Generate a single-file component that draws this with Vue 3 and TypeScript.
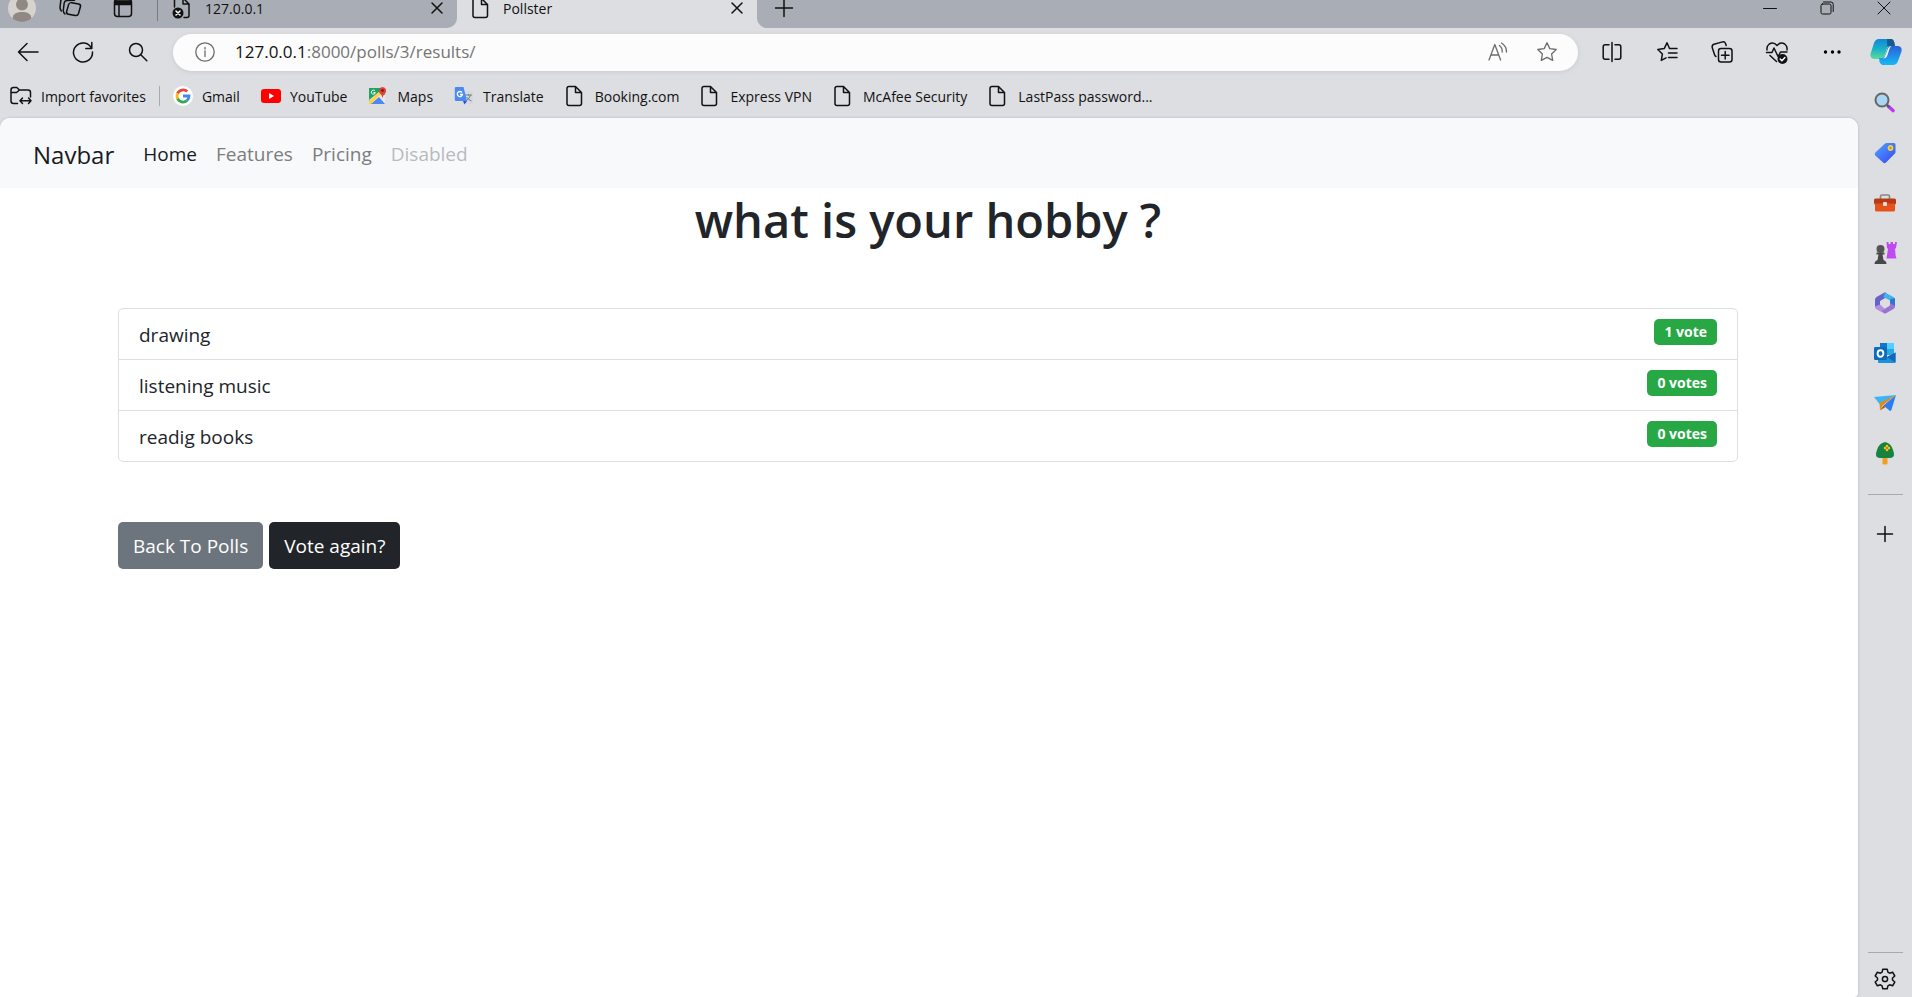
<script setup lang="ts">
import { ref } from 'vue'

interface Bookmark {
  label: string
  icon: 'google' | 'youtube' | 'maps' | 'translate' | 'page'
}

interface Choice {
  text: string
  votes: number
}

interface NavLink {
  label: string
  state: 'active' | 'normal' | 'disabled'
}

const path = ref(':8000/polls/3/results/')

const bookmarks: Bookmark[] = [
  { label: 'Gmail', icon: 'google' },
  { label: 'YouTube', icon: 'youtube' },
  { label: 'Maps', icon: 'maps' },
  { label: 'Translate', icon: 'translate' },
  { label: 'Booking.com', icon: 'page' },
  { label: 'Express VPN', icon: 'page' },
  { label: 'McAfee Security', icon: 'page' },
  { label: 'LastPass password...', icon: 'page' },
]

const navLinks: NavLink[] = [
  { label: 'Home', state: 'active' },
  { label: 'Features', state: 'normal' },
  { label: 'Pricing', state: 'normal' },
  { label: 'Disabled', state: 'disabled' },
]

const choices: Choice[] = [
  { text: 'drawing', votes: 1 },
  { text: 'listening music', votes: 0 },
  { text: 'readig books', votes: 0 },
]

const voteLabel = (n: number): string => `${n} vote${n === 1 ? '' : 's'}`
</script>

<template>
  <div class="browser">
    <header class="strip">
      <div class="strip-left">
        <button class="tool avatar" aria-label="Profile">
          <svg width="28" height="28" viewBox="0 0 28 28">
            <circle cx="14" cy="14" r="14" fill="#d6d3ce" />
            <circle cx="14" cy="10.5" r="6" fill="#8f8883" />
            <path d="M4.5 24.3C5 19.500 9 18 14 18s9 1.500 9.500 6.300A14 14 0 0 1 4.500 24.300z" fill="#8f8883" />
          </svg>
        </button>
        <button class="tool" aria-label="Workspaces">
          <svg width="22" height="22" viewBox="0 0 22 22" class="line">
            <rect x="8.500" y="6" width="12" height="12" rx="2.500" transform="rotate(10 14 12) skewX(-6) translate(1.300 0)" />
            <path d="M15.500 3.300 8 3.500Q5.500 3.700 5.200 6L4.300 13q-.2 2.500 1.700 4" />
            <path d="M10.500 1 4.500 1.400Q2 1.800 1.700 4.300L1 10.500q0 2 1.400 3.500" />
          </svg>
        </button>
        <button class="tool" aria-label="Tab actions">
          <svg width="20" height="20" viewBox="0 0 20 20" class="line">
            <rect x="1.500" y="1.500" width="17" height="17" rx="3" />
            <path d="M2 3h16v3.500H2z" fill="#111" />
            <path d="M6 7v11" />
          </svg>
        </button>
        <div class="tab tab-idle">
          <svg width="20" height="24" viewBox="0 0 20 24" class="line">
            <path d="M3.500 11V4.500Q3.500 2 6 2h6l6 6v11.500q0 2-2 2h-3M12 2.500V8h5.500" />
            <circle cx="7" cy="17" r="5.500" fill="#111" stroke="none" />
            <path d="m5 15 4 4m0-4-4 4" stroke="#fff" />
          </svg>
          <span class="tab-title">127.0.0.1</span>
          <button class="tab-close" aria-label="Close tab">
            <svg width="12" height="12" viewBox="0 0 12 12" class="line"><path d="m1 1 10 10M11 1 1 11" /></svg>
          </button>
        </div>
      </div>
      <div class="tab tab-active">
        <svg width="18" height="22" viewBox="0 0 18 22" class="line">
          <path d="M10.500 1.500H4Q2 1.500 2 3.500v15q0 2 2 2h10.500q2 0 2-2V7.500zM10.500 1.500v6h6" />
        </svg>
        <span class="tab-title">Pollster</span>
        <button class="tab-close" aria-label="Close tab">
          <svg width="12" height="12" viewBox="0 0 12 12" class="line"><path d="m1 1 10 10M11 1 1 11" /></svg>
        </button>
      </div>
      <div class="strip-right">
        <button class="tool" aria-label="New tab">
          <svg width="18" height="18" viewBox="0 0 18 18" class="line"><path d="M9 .5v17M.5 9h17" /></svg>
        </button>
        <div class="window-buttons">
          <button class="tool" aria-label="Minimize">
            <svg width="14" height="14" viewBox="0 0 14 14" class="thin"><path d="M.5 7.500h13" /></svg>
          </button>
          <button class="tool" aria-label="Restore">
            <svg width="14" height="14" viewBox="0 0 14 14" class="thin">
              <rect x="1" y="3" width="10" height="10" rx="1.500" />
              <path d="M3.500 1H11q2.200 0 2.200 2.200v7.300" />
            </svg>
          </button>
          <button class="tool" aria-label="Close">
            <svg width="14" height="14" viewBox="0 0 14 14" class="thin"><path d="m1 1 12 12M13 1 1 13" /></svg>
          </button>
        </div>
      </div>
    </header>

    <div class="toolbar">
      <button class="tool" aria-label="Back">
        <svg width="22" height="20" viewBox="0 0 22 20" class="line"><path d="M10 1.500 1.500 10l8.500 8.500M1.500 10H21" /></svg>
      </button>
      <button class="tool" aria-label="Refresh">
        <svg width="22" height="22" viewBox="0 0 22 22" class="line">
          <path d="M19.500 7.200A9.500 9.500 0 1 0 20.500 11M19.800 1.500v6h-6" />
        </svg>
      </button>
      <button class="tool" aria-label="Search">
        <svg width="20" height="20" viewBox="0 0 20 20" class="line"><circle cx="8" cy="8" r="6.500" /><path d="m12.800 12.800 6 6" /></svg>
      </button>
      <div class="omnibox">
        <svg width="20" height="20" viewBox="0 0 20 20" class="gray">
          <circle cx="10" cy="10" r="9.200" /><path d="M10 9v5.500M10 5.500v1.600" />
        </svg>
        <label class="host" for="address">127.0.0.1</label>
        <input id="address" v-model="path" class="address" type="text" spellcheck="false" />
        <button class="tool" aria-label="Read aloud">
          <svg width="20" height="20" viewBox="0 0 20 20" class="gray">
            <path d="M1 18 6.800 2.500 12.600 18M3 13h7.700M11.500 3.500q3 2.300 2.700 6.500M13.500 1q5.300 3.500 5 9" />
          </svg>
        </button>
        <button class="tool" aria-label="Add to favorites">
          <svg width="22" height="22" viewBox="0 0 22 22" class="gray">
            <path d="m11 1.800 2.800 5.800 6.400.9-4.600 4.500 1.100 6.400-5.700-3-5.700 3 1.100-6.400L1.800 8.500l6.400-.9z" />
          </svg>
        </button>
      </div>
      <div class="actions">
        <button class="tool" aria-label="Split screen">
          <svg width="20" height="20" viewBox="0 0 20 20" class="line">
            <path d="M10 .5v19M7 2.800H3.200q-2 0-2 2v10.400q0 2 2 2H7M13 2.800h3.800q2 0 2 2v10.400q0 2-2 2H13" />
          </svg>
        </button>
        <button class="tool" aria-label="Favorites">
          <svg width="22" height="22" viewBox="0 0 22 22" class="line">
            <path d="M13.500 7.500 11 1.800 8.200 7.600l-6.400.9L6.400 13l-1.100 6.400 4.700-2.500M13.500 7.500H21M12.500 12H21M12.500 16.500H21" />
          </svg>
        </button>
        <button class="tool" aria-label="Collections">
          <svg width="22" height="22" viewBox="0 0 22 22" class="line">
            <rect x="7.500" y="7.500" width="13.500" height="13.500" rx="2.500" />
            <path d="M14.200 10.500v7.500M10.500 14.200H18M5 15.500Q3.800 15 3.500 13.500L1.200 6.500Q.8 4 3 3.300L11.500.9q2.200-.4 3 1.600l.7 2" />
          </svg>
        </button>
        <button class="tool" aria-label="Browser essentials">
          <svg width="24" height="24" viewBox="0 0 24 24" class="line">
            <path d="M2 10Q1.500 6 4.300 4 8.500 1.500 12 5.500 15.500 1.500 19.700 4 22.500 6 22 10M1.500 12.500H7l2-4.500 4 8.500 2.500-4.500h6.500M5 15.500l6.500 6" />
            <circle cx="17.500" cy="19" r="5" fill="#111" stroke="none" />
            <path d="m15.200 19 1.700 1.700 3-3.200" stroke="#fff" />
          </svg>
        </button>
        <button class="tool" aria-label="More">
          <svg width="18" height="6" viewBox="0 0 18 6"><circle cx="2.500" cy="3" r="1.700" /><circle cx="9.500" cy="3" r="1.700" /><circle cx="16" cy="3" r="1.700" /></svg>
        </button>
      </div>
      <button class="tool copilot" aria-label="Copilot">
        <svg width="32" height="28" viewBox="0 0 32 28">
          <defs>
            <linearGradient id="cpA" x1="0" y1="0" x2="0" y2="1">
              <stop offset="0" stop-color="#1783d8" /><stop offset=".5" stop-color="#18b3c8" /><stop offset="1" stop-color="#5bdc9a" />
            </linearGradient>
            <linearGradient id="cpB" x1="0" y1="0" x2="0" y2="1">
              <stop offset="0" stop-color="#2b5fd8" /><stop offset="1" stop-color="#16b8f4" />
            </linearGradient>
          </defs>
          <path d="M9 1h12q2.500.3 3.300 3.500L25 8h-5q-2.500 0-3.300 2.800L14 19q-1 2-3 2H4q-4-.5-3.500-5L4 5Q5.500 1 9 1z" fill="url(#cpA)" />
          <path d="M17 1h4q2.500.3 3.300 3.500L25 8h-5q-2 0-2.700 1z" fill="#135d8e" />
          <path d="M23 27H13q-2.500-.3-3.300-3L9 20h3q2 0 2.700-2.500L17.500 10q.8-2 3-2H28q4.500.5 3.500 5.500L28 23q-1.300 4-5 4z" fill="url(#cpB)" />
          <path d="M9 20q.5 7 5.500 7-3 0-4.800-3z" fill="#1443d5" />
          <path d="M13 20.500q1.500-.5 2.200-3L18 10.500Q19 8 21.500 8q-1.500 1-2.200 3.500L17.500 17q-1 3.500-4.500 3.500z" fill="#edf3f7" />
        </svg>
      </button>
    </div>

    <div class="body">
      <div class="main">
        <nav class="bookmarks" aria-label="Favorites bar">
          <a class="bookmark" href="#">
            <svg width="22" height="20" viewBox="0 0 22 20" class="line">
              <path d="M7.500 17.500H3.500q-2.500 0-2.500-2.500V4q0-2.500 2.500-2.500h3.300L9.500 4H18q2.500 0 2.500 2.500V11M1 6.500h5.500L9.500 4M12.500 12 10 14.800l2.500 2.700M18.500 12l2.500 2.800-2.500 2.700M10.500 14.800H21" />
            </svg>
            Import favorites
          </a>
          <span class="divider"></span>
          <a v-for="b in bookmarks" :key="b.label" class="bookmark" :class="b.icon" href="#">
            <svg v-if="b.icon === 'google'" width="20" height="20" viewBox="0 0 20 20">
              <circle cx="10" cy="10" r="10" fill="#fff" />
              <g fill="none" stroke-width="2.800">
                <path d="M14.200 5.600A6 6 0 0 0 4.600 7.400" stroke="#ea4335" />
                <path d="M4.600 7.400a6 6 0 0 0 0 5.200" stroke="#fbbc05" />
                <path d="M4.600 12.600A6 6 0 0 0 13.900 14.600" stroke="#34a853" />
                <path d="M13.900 14.600A6 6 0 0 0 16 10h-6" stroke="#4285f4" />
              </g>
            </svg>
            <svg v-else-if="b.icon === 'youtube'" width="20" height="20" viewBox="0 0 20 20">
              <rect y="3" width="20" height="14" rx="3" fill="#f00" /><path d="m8 7 5.200 3L8 13z" fill="#fff" />
            </svg>
            <svg v-else-if="b.icon === 'maps'" width="20" height="20" viewBox="0 0 20 20">
              <rect x="1" y="2" width="16" height="16" rx="1.500" fill="#4a9" />
              <path d="M1 2h11v6L1 17z" fill="#1fa463" />
              <path d="m1 14 10-8 6 3v9H5z" fill="#e8e8e8" />
              <path d="m3 18 8-7 6 7z" fill="#4a89f3" />
              <path d="m1 15 10-9 2 2L3 18H1z" fill="#ffd04b" />
              <path d="M6.800 4.800A2 2 0 1 0 7.300 6.500H5.500" fill="none" stroke="#fff" />
              <path d="M14.500 12q-.5-3-2.500-4.500-1.500-2-1-4Q11.700 1 14.500 1T18 3.500q.5 2-1 4-2 1.500-2.500 4.500z" fill="#db4437" />
              <circle cx="14.500" cy="4.500" r="1.400" fill="#7b1f16" />
            </svg>
            <svg v-else-if="b.icon === 'translate'" width="20" height="20" viewBox="0 0 20 20">
              <rect x="8" y="5" width="11" height="13" rx="1" fill="#d6d9dc" />
              <path d="M11 9h7M14.500 8v1.500M16.500 9q-1 4-4.500 6M12.500 11q2 3 5 4" fill="none" stroke="#73808b" />
              <path d="M2 1h7.500L13 15H2q-1.200 0-1.200-1.200V2.200Q.8 1 2 1z" fill="#4a8af4" />
              <path d="M9 15h4l-2.500 3.500z" fill="#304fc1" />
              <path d="M8 6.500A2.600 2.600 0 1 0 8.500 8.500H6" fill="none" stroke="#fff" stroke-width="1.300" />
            </svg>
            <svg v-else width="18" height="22" viewBox="0 0 18 22" class="line">
              <path d="M10.500 1.500H4Q2 1.500 2 3.500v15q0 2 2 2h10.500q2 0 2-2V7.500zM10.500 1.500v6h6" />
            </svg>
            {{ b.label }}
          </a>
        </nav>

        <div class="viewport">
          <nav class="navbar">
            <a class="brand" href="#">Navbar</a>
            <a v-for="n in navLinks" :key="n.label" class="nav-link" :class="n.state" href="#">{{ n.label }}</a>
          </nav>
          <main class="content">
            <h1>what is your hobby ?</h1>
            <ul class="results">
              <li v-for="c in choices" :key="c.text">
                <span>{{ c.text }}</span>
                <span class="badge">{{ voteLabel(c.votes) }}</span>
              </li>
            </ul>
            <div class="buttons">
              <a class="btn secondary" href="#">Back To Polls</a>
              <a class="btn dark" href="#">Vote again?</a>
            </div>
          </main>
        </div>
      </div>

      <aside class="sidebar">
        <button class="side" aria-label="Search">
          <svg width="22" height="22" viewBox="0 0 22 22">
            <path d="m14.500 14.500 4.500 4" stroke="#b43df0" stroke-width="3.600" stroke-linecap="round" />
            <path d="m12 12 3 3" stroke="#555" stroke-width="2" />
            <circle cx="8" cy="8" r="6.500" fill="#a9d6f5" stroke="#666" stroke-width="2" />
          </svg>
        </button>
        <button class="side" aria-label="Shopping">
          <svg width="22" height="22" viewBox="0 0 22 22">
            <defs><linearGradient id="tag" x1="0" y1="0" x2="1" y2="1"><stop offset="0" stop-color="#55a5ff" /><stop offset="1" stop-color="#3346f0" /></linearGradient></defs>
            <path d="M12.500 1H20q1.500 0 1.500 1.500v7.500q0 1-.8 1.800L12 20.500q-1.500 1.300-3 0L1.300 13.500q-1.200-1.500 0-3L10.500 2q1-1 2-1z" fill="url(#tag)" />
            <circle cx="16.500" cy="6" r="2" fill="#6f8ee0" stroke="#f8cf28" stroke-width="1.800" />
          </svg>
        </button>
        <button class="side" aria-label="Tools">
          <svg width="22" height="20" viewBox="0 0 22 20">
            <path d="M6.500 6V3.500Q6.500 2 8 2h6q1.500 0 1.500 1.500V6" fill="none" stroke="#888" stroke-width="1.700" />
            <rect y="5.500" width="22" height="6" rx="1.500" fill="#b83a14" />
            <path d="M1 10.500h20V17q0 1.500-1.500 1.500h-17Q1 18.500 1 17z" fill="#e6531a" />
            <rect x="9" y="9" width="4" height="4" rx="1" fill="#ddd" />
          </svg>
        </button>
        <button class="side" aria-label="Games">
          <svg width="24" height="24" viewBox="0 0 24 24">
            <path d="M13.500 1h2v2h2V1h2.500v2h2V1H24l-1 6-1 1 .7 7 .8 2.500H13.500L15 8l-1-1z" fill="#bf4bf0" />
            <circle cx="7.500" cy="8" r="4" fill="#555" />
            <path d="M3.500 11.500h8v2h-2l1 5.500q3 1 3 4H1.500q0-3 3-4l1-5.500h-2z" fill="#484848" />
          </svg>
        </button>
        <button class="side" aria-label="Microsoft 365">
          <svg width="22" height="22" viewBox="0 0 22 22">
            <path d="M10.500.5 2.500 5Q1 6 1 7.500v7L6 17V9l8.500-5L12 .7q-.8-.5-1.500-.2z" fill="#6562ca" />
            <path d="M11 .5 19.500 5Q21 6 21 7.500V12l-5-1V8.500L9.500 5z" fill="#41b5e8" />
            <path d="M21 9v5.500q0 1.500-1.500 2.500l-7.500 4.200q-1 .5-2 0L5 18l1-2 4.500 1 5.500-3.500V8.500z" fill="#9a73d1" />
            <path d="M1 14.500 6 12.500l5 4.500-4.500 2.500L2 17q-1-1-1-2.500z" fill="#b48ce0" />
            <path d="m16 7.500 4.500-1.500q.5.500.5 1.500V14l-5-3z" fill="#2f76cf" />
          </svg>
        </button>
        <button class="side" aria-label="Outlook">
          <svg width="22" height="22" viewBox="0 0 22 22">
            <rect x="6" y="1" width="14" height="12" rx="1" fill="#28a8ea" />
            <path d="M6 1h7v6H6z" fill="#0f78c8" /><path d="M13 1h7v6h-7z" fill="#50d0ff" />
            <path d="M4 10.500 13 15l8.500-4.500V20q0 1-1 1H5q-1 0-1-1z" fill="#1b90df" />
            <path d="M21.500 10.500v10L13 15z" fill="#1466b5" />
            <rect x="0" y="5" width="13" height="13" rx="1.300" fill="#0f6cbd" />
            <ellipse cx="6.500" cy="11.500" rx="2.900" ry="3.200" fill="none" stroke="#fff" stroke-width="1.900" />
          </svg>
        </button>
        <button class="side" aria-label="Drop">
          <svg width="22" height="20" viewBox="0 0 22 20">
            <path d="M0 4 22 2 5.500 11z" fill="#3cb4f5" />
            <path d="M5.500 10 22 2 8.500 12.500 6 17.500z" fill="#e38a12" />
            <path d="M22 2 9.500 12.500 16 18q1 0 1.400-1z" fill="#2b7df0" />
            <path d="m6 17.500 3.500-5 2 1.500z" fill="#a85c08" />
          </svg>
        </button>
        <button class="side" aria-label="Tree">
          <svg width="20" height="24" viewBox="0 0 20 24">
            <rect x="7.500" y="15" width="5" height="8.500" rx=".8" fill="#f0a020" />
            <path d="M10 1q6 1 8 8 3 7-2.500 8h-11Q-1 16 2 9 4 2 10 1z" fill="#168340" />
            <path d="M12 5v4M10 7h4" stroke="#f7c51d" stroke-width="2.500" stroke-linecap="round" />
            <circle cx="12" cy="7" r="1.200" fill="#d97608" />
          </svg>
        </button>
        <hr />
        <button class="side add" aria-label="Customize">
          <svg width="16" height="16" viewBox="0 0 16 16" class="line"><path d="M8 .5v15M.5 8h15" /></svg>
        </button>
        <hr class="bottom-rule" />
        <button class="side gear" aria-label="Settings">
          <svg width="22" height="22" viewBox="0 0 22 22" class="line">
            <path d="M8.800 1.200h4.400l.7 3 1.700 1 3-1 2.200 3.800-2.300 2v2l2.300 2-2.200 3.800-3-1-1.700 1-.7 3H8.800l-.7-3-1.700-1-3 1L1.200 14l2.300-2v-2l-2.300-2 2.200-3.800 3 1 1.700-1z" />
            <circle cx="11" cy="11" r="2.600" />
          </svg>
        </button>
      </aside>
    </div>
  </div>
</template>

<style>
body {
  margin: 0;
}
</style>

<style scoped>
.browser {
  display: flex;
  flex-direction: column;
  height: 100vh;
  overflow: hidden;
  background: #dddee2;
  color: #111;
  font-family: "Segoe UI", "Open Sans", "Noto Sans", sans-serif;
  font-size: 14px;
}

* {
  box-sizing: border-box;
}

svg {
  display: block;
  flex: none;
  overflow: visible;
}

.line,
.thin,
.gray {
  fill: none;
  stroke: #111;
  stroke-width: 1.5;
  stroke-linejoin: round;
  stroke-linecap: round;
}

.thin {
  stroke-width: 1;
}

.gray {
  stroke: #6c6c6c;
  stroke-width: 1.3;
}

a {
  color: inherit;
  text-decoration: none;
}

button {
  padding: 0;
  border: 0;
  background: none;
  font: inherit;
}

.tool {
  display: flex;
  align-items: center;
  justify-content: center;
  flex: none;
  width: 55px;
  height: 40px;
}

.strip {
  display: flex;
  align-items: flex-end;
  flex: none;
  height: 28px;
}

.strip-left,
.strip-right {
  display: flex;
  height: 40px;
  background: #a9adb5;
}

.strip-left {
  border-bottom-right-radius: 10px;
}

.strip-right {
  flex: 1;
  border-bottom-left-radius: 10px;
}

.strip-left .tool {
  width: 53px;
}

.strip-left .avatar {
  width: 43px;
}

.strip-right .tool {
  width: 53px;
}

.tab {
  display: flex;
  align-items: center;
  gap: 14px;
  width: 300px;
  height: 40px;
  padding: 0 14px;
}

.tab-idle {
  margin-left: 8px;
  background: linear-gradient(#777c82, #777c82) left 0 top 0 / 1px 33px no-repeat;
}

.tab-title {
  flex: 1;
}

.tab-close {
  display: flex;
}

.window-buttons {
  display: flex;
  margin-left: auto;
}

.window-buttons .tool {
  width: 57px;
}

.toolbar {
  display: flex;
  align-items: center;
  flex: none;
  height: 48px;
}

.omnibox {
  display: flex;
  align-items: center;
  flex: 1;
  height: 37px;
  margin: 0 6px 0 8px;
  padding: 0 7px 0 22px;
  border-radius: 19px;
  background: #fcfcfc;
  box-shadow: 0 1px 5px #c9cbd0;
}

.omnibox .tool {
  width: 49px;
}

.host,
.address {
  font-size: 17px;
  line-height: 24px;
}

.host {
  margin-left: 20px;
  color: #111;
}

.address {
  flex: 1;
  min-width: 0;
  padding: 0;
  border: 0;
  outline: 0;
  background: none;
  color: #757575;
  font-family: inherit;
}

.actions {
  display: flex;
}

.copilot {
  width: 53px;
}

.body {
  display: flex;
  flex: 1;
  min-height: 0;
}

.main {
  display: flex;
  flex-direction: column;
  flex: 1;
  min-width: 0;
}

.bookmarks {
  display: flex;
  align-items: center;
  gap: 21px;
  flex: none;
  height: 42px;
  padding: 0 10px 2px;
  white-space: nowrap;
}

.bookmark {
  display: flex;
  align-items: center;
  gap: 9px;
}

.bookmark.page {
  gap: 12px;
}

.divider {
  width: 1px;
  height: 20px;
  margin: 0 -8px;
  background: #a8aaad;
}

.viewport {
  flex: 1;
  border-radius: 10px 10px 4px 0;
  background: #fff;
  box-shadow: 0 0 3px #b4b6ba;
  overflow: hidden;
}

.navbar {
  display: flex;
  align-items: center;
  gap: 19px;
  height: 70px;
  padding: 2px 33px 0;
  background: #f8f9fb;
  color: #7c7d7e;
  font-size: 19px;
}

.brand {
  margin-right: 10px;
  color: #1a1b1c;
  font-size: 24px;
}

.active {
  color: #1a1b1c;
}

.disabled {
  color: #b9babb;
}

.content {
  padding: 2px 120px 0 118px;
  color: #212529;
  font-size: 19px;
}

h1 {
  margin: 0 0 58px;
  font-size: 47px;
  font-weight: 600;
  line-height: 60px;
  text-align: center;
}

.results {
  margin: 0 0 60px;
  padding: 0;
  border: 1px solid #dfdfdf;
  border-radius: 5px;
  list-style: none;
}

.results li {
  display: flex;
  align-items: flex-start;
  justify-content: space-between;
  padding: 10px 20px 8px;
  line-height: 32px;
}

.results li + li {
  border-top: 1px solid #dfdfdf;
}

.badge {
  padding: 0 10px;
  border-radius: 5px;
  background: #28a745;
  color: #fff;
  font-size: 14px;
  font-weight: 700;
  line-height: 26px;
}

.buttons {
  display: flex;
  gap: 6px;
}

.btn {
  padding: 2px 15px 0;
  border-radius: 5px;
  color: #fff;
  line-height: 45px;
}

.secondary {
  background: #6c757d;
}

.dark {
  background: #212529;
}

.sidebar {
  display: flex;
  flex-direction: column;
  align-items: center;
  flex: none;
  width: 54px;
  padding-top: 2px;
}

.side {
  display: flex;
  align-items: center;
  justify-content: center;
  width: 54px;
  height: 50px;
}

hr {
  width: 35px;
  margin: 16px 0;
  border: 0;
  border-top: 1px solid #a8aaad;
}

.add {
  height: 46px;
}

.bottom-rule {
  margin: auto 0 8px;
}

.gear {
  height: 36px;
}
</style>
